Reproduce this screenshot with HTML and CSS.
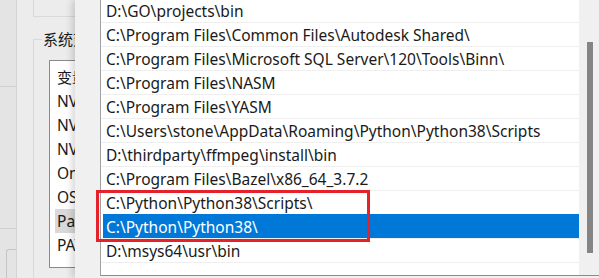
FILE: index.html
```html
<!DOCTYPE html>
<html lang="zh-CN">
<head>
  <meta charset="UTF-8">
  <title>编辑环境变量</title>
  <meta name="viewport" content="width=device-width, initial-scale=1">
  <link rel="stylesheet" href="styles.css">
</head>
<body>
  <div class="desk">
    <div class="window back">
      <div class="strip">
        <div class="strip-line first"></div>
        <div class="strip-line second"></div>
        <div class="strip-button"></div>
      </div>
      <div class="main">
        <div class="user-group"></div>
        <fieldset class="sys-group">
          <legend>系统变量(S)</legend>
          <div class="var-list">
            <div class="var-head">变量</div>
            <div class="var-row">NVCUDASAMPLES_ROOT</div>
            <div class="var-row">NVCUDASAMPLES11_0_ROOT</div>
            <div class="var-row">NVTOOLSEXT_PATH</div>
            <div class="var-row">OneDrive</div>
            <div class="var-row">OS</div>
            <div class="var-row selected">Path</div>
            <div class="var-row">PATHEXT</div>
          </div>
        </fieldset>
      </div>
    </div>

    <div class="window front">
      <div class="path-list">
        <div class="rows">
          <div class="row">D:\GO\projects\bin</div>
          <div class="row">C:\Program Files\Common Files\Autodesk Shared\</div>
          <div class="row">C:\Program Files\Microsoft SQL Server\120\Tools\Binn\</div>
          <div class="row">C:\Program Files\NASM</div>
          <div class="row">C:\Program Files\YASM</div>
          <div class="row">C:\Users\stone\AppData\Roaming\Python\Python38\Scripts</div>
          <div class="row">D:\thirdparty\ffmpeg\install\bin</div>
          <div class="row">C:\Program Files\Bazel\x86_64_3.7.2</div>
          <div class="row">C:\Python\Python38\Scripts\</div>
          <div class="row selected">C:\Python\Python38\</div>
          <div class="row">D:\msys64\usr\bin</div>
          <div class="row"></div>
        </div>
        <div class="scrollbar">
          <div class="thumb"></div>
        </div>
      </div>
      <!-- 标注框 -->
      <div class="mark"></div>
    </div>
  </div>
</body>
</html>
```

FILE: styles.css
```css
html, body {
  margin: 0;
  padding: 0;
}
body {
  width: 599px;
  height: 278px;
  overflow: hidden;
  font-family: "Noto Sans", "Noto Sans CJK SC", sans-serif;
  color: #1a1a1a;
  background-color: #ededed;
}
.desk {
  position: relative;
  width: 599px;
  height: 278px;
  overflow: hidden;
}
.window {
  position: absolute;
  top: 0;
  height: 278px;
}

/* 后面的“环境变量”窗口，只露出左边一条 */
.back {
  left: 0;
  width: 75px;
  display: flex;
  overflow: hidden;
  background-color: #ececec;
}
.strip {
  flex: none;
  width: 16px;
  border-right: 1px solid #d4d4d4;
  background-color: #e4e4e4;
  display: flex;
  flex-direction: column;
}
.strip-line {
  height: 1px;
  background-color: #d0d0d0;
}
.strip-line.first {
  margin-top: 86px;
}
.strip-line.second {
  margin-top: 141px;
}
.strip-button {
  flex: 1;
  margin-top: 20px;
  margin-left: 6px;
  border-top: 1px solid #c6c6c6;
  border-left: 1px solid #c6c6c6;
  border-top-left-radius: 3px;
}
.main {
  flex: 1;
  min-width: 0;
  display: flex;
  flex-direction: column;
}
.user-group {
  height: 16px;
  margin-left: 16px;
  border-left: 1px solid #d9d9d9;
  border-bottom: 1px solid #d9d9d9;
}
.sys-group {
  margin: 12px 0 0 16px;
  padding: 0;
  border: none;
  border-top: 1px solid #d9d9d9;
  border-left: 1px solid #d9d9d9;
  flex: 1;
  min-width: 0;
  overflow: hidden;
}
.sys-group legend {
  margin-left: 8px;
  padding: 0 1px;
  font-family: "Noto Sans CJK SC", sans-serif;
  font-size: 15px;
  line-height: 20px;
  white-space: nowrap;
}
.var-list {
  margin: 11px 0 0 15px;
  height: 206px;
  border: 1px solid #8a8a8a;
  border-right: none;
  background-color: #fff;
  overflow: hidden;
  font-size: 15.5px;
}
.var-head {
  padding: 4px 0 0 7px;
  height: 24px;
  line-height: 24px;
  font-family: "Noto Sans CJK SC", sans-serif;
  font-size: 15px;
  white-space: nowrap;
}
.var-row {
  margin-left: 5px;
  padding-left: 2px;
  height: 24px;
  line-height: 24px;
  white-space: nowrap;
  overflow: hidden;
}
.var-row.selected {
  background-color: #d9d9d9;
}

/* 前面的“编辑环境变量”窗口 */
.front {
  left: 75px;
  width: 524px;
  background-color: #f0f0f0;
  box-shadow: -3px 0 7px rgba(0, 0, 0, 0.16);
}
.path-list {
  display: flex;
  margin: -3px 0 0 25px;
  height: 277px;
  border-top: 1px solid #a0a0a0;
  border-left: 1px solid #a0a0a0;
  border-bottom: 1px solid #8a8a8a;
  background-color: #fff;
  overflow: hidden;
}
.rows {
  width: 478px;
  font-size: 15.5px;
}
.row {
  height: 23px;
  line-height: 25px;
  padding-left: 5px;
  border-top: 1px solid #efefef;
  white-space: nowrap;
  overflow: hidden;
}
.row.selected {
  margin-left: 2px;
  padding-left: 3px;
  color: #fff;
  background-color: #0078d7;
  border-top-color: #0078d7;
}
.scrollbar {
  width: 20px;
  background-color: #f0f0f0;
}
.thumb {
  margin: 44px 0 0 8px;
  width: 6px;
  height: 211px;
  background-color: #858585;
}
.mark {
  position: absolute;
  left: 21px;
  top: 190px;
  width: 274px;
  height: 52px;
  box-sizing: border-box;
  border: 3px solid #e5212b;
}
```
